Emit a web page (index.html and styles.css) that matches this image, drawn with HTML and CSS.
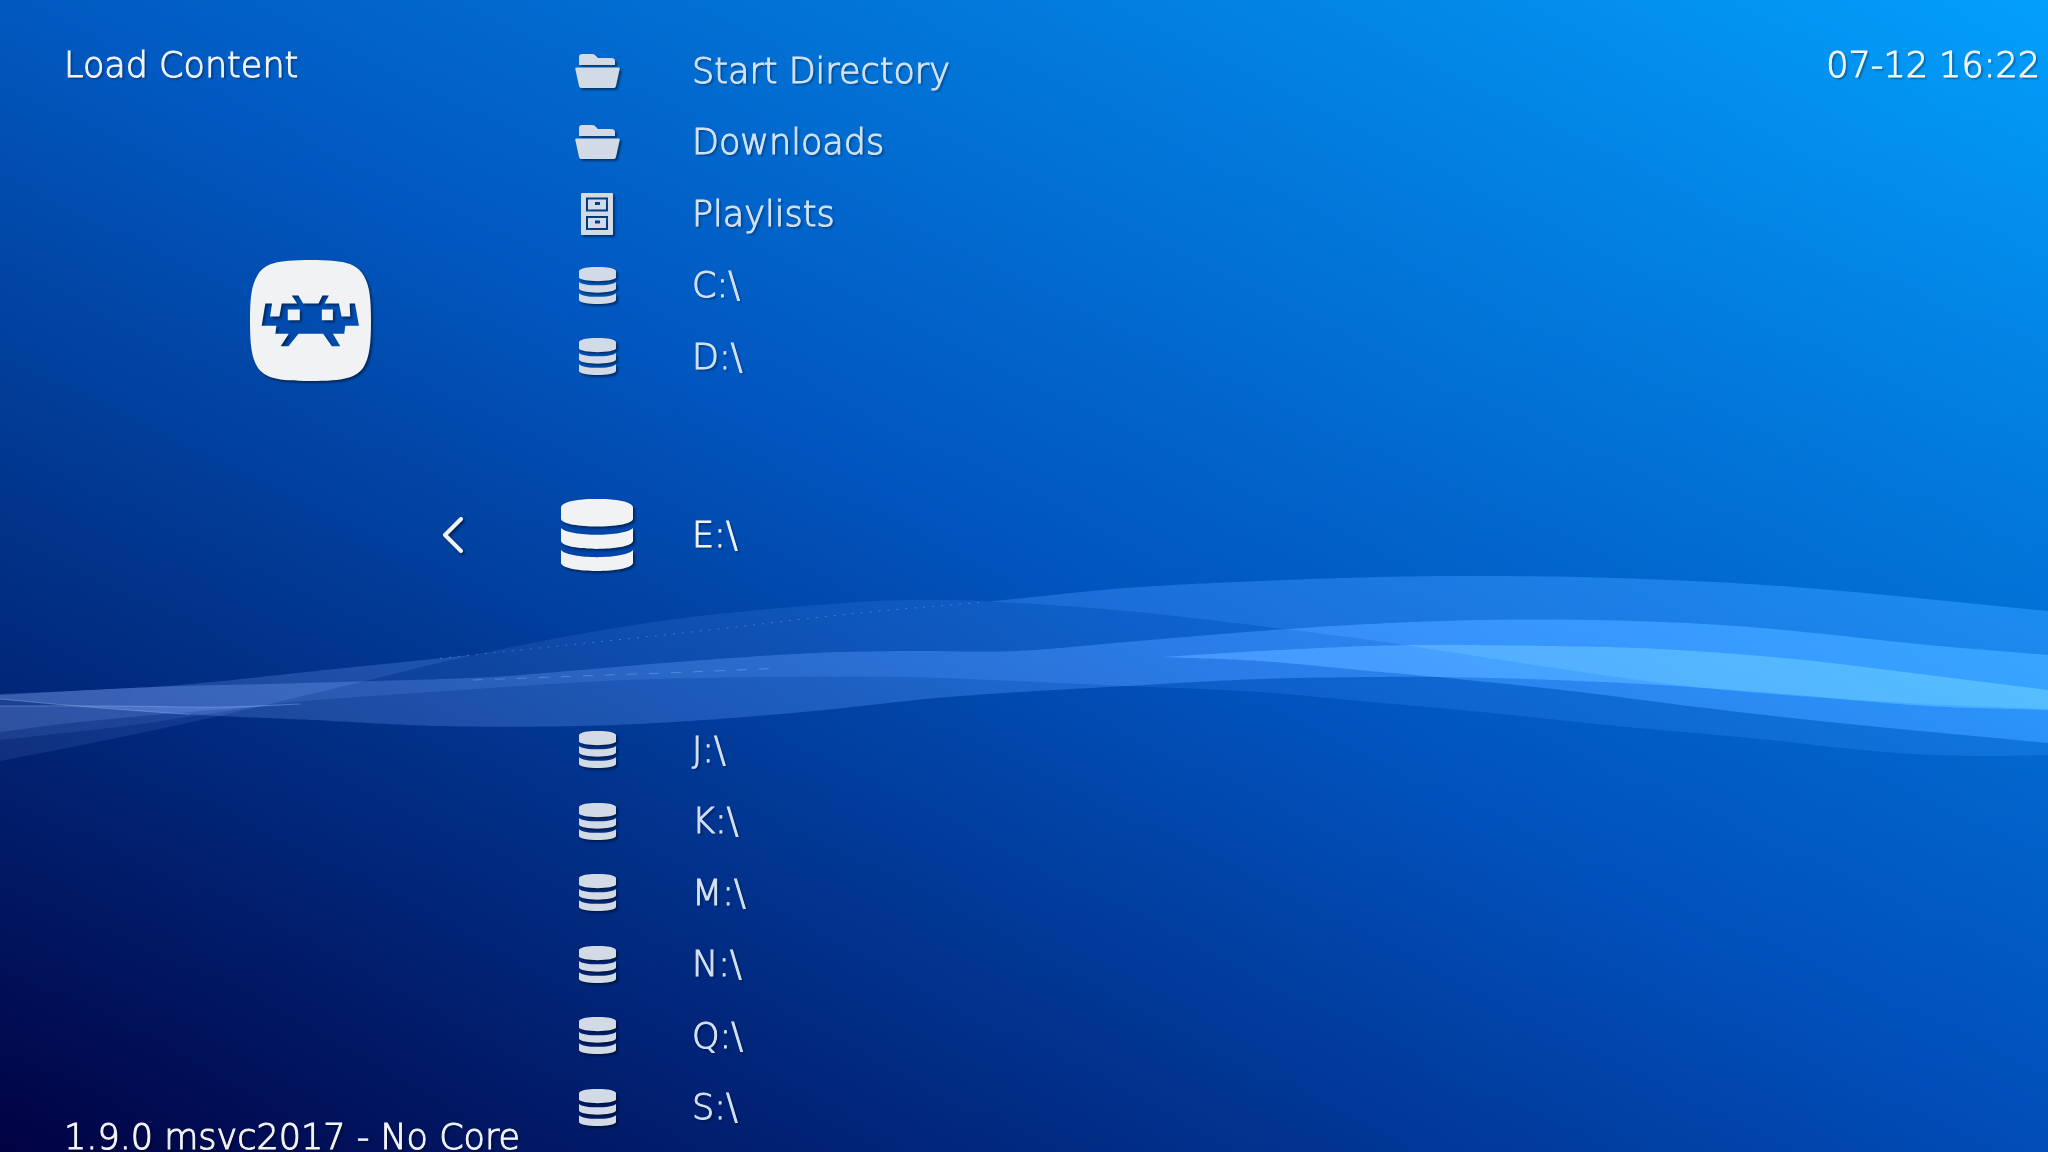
FILE: index.html
```html
<!DOCTYPE html>
<html lang="en">
<head>
<meta charset="utf-8">
<title>Load Content</title>
<link rel="stylesheet" href="styles.css">
</head>
<body>
<svg class="defs" aria-hidden="true">
  <symbol id="drive" viewBox="0 0 72 72">
    <path d="M0 8C2-3 70-3 72 8V20C70 30 2 30 0 20Z"/>
    <path d="M0 29C8 38 64 38 72 29V42C70 52.5 2 52.5 0 42Z"/>
    <path d="M0 51C8 60.5 64 60.5 72 51V64C70 74.6 2 74.6 0 64Z"/>
  </symbol>
  <symbol id="folder" viewBox="0 0 45 34">
    <path d="M4 11V3Q4 0 7 0H17Q20 0 21 2L23 4H36Q40 4 40 7V11Z"/>
    <path d="M1 13.5H44Q45 13.500 44.700 15L41 32Q40.500 34 39 34H6Q4.500 34 4 32L.3 15Q0 13.500 1 13.500Z"/>
  </symbol>
  <symbol id="cabinet" viewBox="0 0 32 42">
    <path fill-rule="evenodd" d="M1 0H31Q32 0 32 1V41Q32 42 31 42H1Q0 42 0 41V1Q0 0 1 0ZM5 4.500V18.500H27V4.500ZM7 6.500H25V16.500H7ZM5 23V37H27V23ZM7 25H25V35H7ZM14 9V12H19V9ZM14 27.500V30.500H19V27.500Z"/>
  </symbol>
</svg>

<svg class="waves" viewBox="0 0 2048 1152" preserveAspectRatio="none" aria-hidden="true"></svg>

<div class="screen">
  <div class="side">
    <h1 class="title">Load Content</h1>
    <svg class="logo" viewBox="62 60 362 362" role="img" aria-label="RetroArch">
      <path fill-rule="evenodd" d="M243 60C345 60 380 70 402 106C420 136 424 175 424 241C424 310 420 350 402 380C380 412 345 422 243 422C141 422 106 412 84 380C66 350 62 310 62 241C62 175 66 136 84 106C106 70 141 60 243 60ZM108 190L97 257H141L138 281H178L154 318H177L207 281H281L307 318H332L310 281H344L347 257H388L376 190H360L362 229H336L328 190H285L298 166H279L267 190H221L207 166H187L203 190H157L150 229H122L128 190ZM175 208H211V240H175ZM277 208H310V240H277Z"/>
    </svg>
    <p class="version">1.9.0 msvc2017 - No Core</p>
  </div>

  <ul class="entries">
    <li><a class="entry" href="#start"><svg class="icon icon-folder"><use href="#folder"/></svg><span class="label">Start Directory</span></a></li>
    <li><a class="entry" href="#downloads"><svg class="icon icon-folder"><use href="#folder"/></svg><span class="label">Downloads</span></a></li>
    <li><a class="entry" href="#playlists"><svg class="icon icon-cabinet"><use href="#cabinet"/></svg><span class="label">Playlists</span></a></li>
    <li><a class="entry" href="#c"><svg class="icon icon-drive"><use href="#drive"/></svg><span class="label">C:\</span></a></li>
    <li><a class="entry" href="#d"><svg class="icon icon-drive"><use href="#drive"/></svg><span class="label">D:\</span></a></li>
    <li class="current">
      <button class="back" type="button" aria-label="Back"><svg class="chevron" viewBox="0 0 22 38"><path d="M19 3L3 19L19 35"/></svg></button>
      <a class="entry" href="#e" aria-current="true"><svg class="icon icon-active"><use href="#drive"/></svg><span class="label">E:\</span></a>
    </li>
    <li><a class="entry" href="#j"><svg class="icon icon-drive"><use href="#drive"/></svg><span class="label">J:\</span></a></li>
    <li><a class="entry" href="#k"><svg class="icon icon-drive"><use href="#drive"/></svg><span class="label">K:\</span></a></li>
    <li><a class="entry" href="#m"><svg class="icon icon-drive"><use href="#drive"/></svg><span class="label">M:\</span></a></li>
    <li><a class="entry" href="#n"><svg class="icon icon-drive"><use href="#drive"/></svg><span class="label">N:\</span></a></li>
    <li><a class="entry" href="#q"><svg class="icon icon-drive"><use href="#drive"/></svg><span class="label">Q:\</span></a></li>
    <li><a class="entry" href="#s"><svg class="icon icon-drive"><use href="#drive"/></svg><span class="label">S:\</span></a></li>
  </ul>

  <time class="clock">07-12 16:22</time>
</div>
<script src="waves.js"></script>
</body>
</html>
```

FILE: styles.css
```css
* {
  box-sizing: border-box;
}

body {
  margin: 0;
  height: 100vh;
  overflow: hidden;
  position: relative;
  font-family: "DejaVu Sans", "Noto Sans", sans-serif;
  font-weight: 200;
  font-size: 35px;
  line-height: 44px;
  color: #f2f4f8;
  -webkit-text-stroke: 1px currentColor;
  text-shadow: 2px 2px 2px rgba(0, 0, 0, 0.4);
  background:
    linear-gradient(to bottom right, rgba(0, 200, 255, 0.05), rgba(0, 200, 255, 0) 50%, rgba(0, 0, 130, 0) 50%, rgba(0, 0, 130, 0.08)),
    linear-gradient(to top right, #010243, #0153bd 50%, #039ffb);
}

.defs {
  position: absolute;
  width: 0;
  height: 0;
}

/* Ribbon backdrop */
.waves {
  position: absolute;
  inset: 0;
  width: 100%;
  height: 100%;
}

.ribbon {
  fill: #fff;
  mix-blend-mode: plus-lighter;
}

.spark {
  fill: none;
  stroke: #a0c4ff;
  stroke-width: 1;
  opacity: 0.35;
}

.screen {
  position: relative;
  display: grid;
  grid-template-columns: 433px 1fr auto;
  grid-template-rows: minmax(0, 1fr);
  height: 100%;
}

/* Left column */
.side {
  display: flex;
  flex-direction: column;
  padding: 43px 0 0 64px;
  white-space: nowrap;
}

.title,
.version {
  margin: 0;
  font-size: 35px;
  font-weight: 200;
}

.logo {
  width: 121px;
  height: 121px;
  margin: 173px 0 0 186px;
  fill: #f1f2f4;
  filter: drop-shadow(2px 2px 1px rgba(0, 0, 0, 0.45));
}

.version {
  margin-top: auto;
  line-height: 30px;
}

.clock {
  padding: 43px 8px 0 0;
}

/* Entry list: the current row has free space above and below it */
.entries {
  display: grid;
  grid-template-rows: repeat(5, minmax(0, 2fr)) minmax(0, 9fr) repeat(6, minmax(0, 2fr));
  margin: 0;
  padding: 35px 0 9px;
  list-style: none;
}

.entries li {
  display: flex;
  align-items: center;
  padding-left: 112px;
}

.entries .current {
  display: grid;
  grid-template-columns: 112px 1fr;
  grid-template-rows: minmax(0, 3fr) minmax(0, 2fr) minmax(0, 4fr);
  padding-left: 0;
}

.back {
  grid-row: 2;
  display: flex;
  padding: 0 0 0 9px;
  border: 0;
  background: none;
}

.chevron {
  width: 22px;
  height: 38px;
  fill: none;
  stroke: #f1f2f4;
  stroke-width: 4;
  stroke-linecap: round;
  stroke-linejoin: round;
  filter: drop-shadow(2px 2px 1px rgba(0, 0, 0, 0.45));
}

.entry {
  display: grid;
  grid-template-columns: 104px auto;
  column-gap: 43px;
  align-items: center;
  justify-content: start;
  justify-items: center;
  color: #d4e2f4;
  text-decoration: none;
  white-space: nowrap;
}

.current .entry {
  grid-row: 2;
  color: #f2f4f8;
}

.icon {
  fill: #d2dae6;
  filter: drop-shadow(2px 2px 1px rgba(0, 0, 0, 0.45));
}

.icon-folder {
  width: 45px;
  height: 34px;
}

.icon-cabinet {
  width: 32px;
  height: 42px;
}

.icon-drive {
  width: 37px;
  height: 37px;
}

.icon-active {
  width: 72px;
  height: 72px;
  fill: #f1f2f4;
}
```

FILE: waves.js
```js
// Edges of the ribbons, as x, y pairs on a 2048 x 1152 canvas.
const crestA = [0,694, 90,690, 179,685, 335,669, 491,653, 700,631, 859,613, 984,602, 1126,588, 1260,581, 1380,577, 1482,576, 1616,578, 1794,587, 2048,611];
const crestB = [0,761, 112,739, 223,715, 357,683, 469,656, 580,634, 700,616, 859,602, 930,600, 1001,602, 1126,611, 1260,626, 1370,640, 1482,657, 1616,677, 1705,688, 1794,696, 1928,704, 2048,709];
const midTop = [0,695, 152,687, 268,684, 375,681, 491,677, 580,670, 690,661, 814,653, 903,651, 1015,651, 1126,642, 1260,631, 1370,624, 1482,620, 1594,620, 1705,624, 1794,631, 1928,645, 2048,655];
const midBottom = [0,699, 89,707, 201,715, 313,720, 438,726, 580,726, 690,721, 814,711, 948,697, 1126,686, 1260,679, 1370,677, 1437,677, 1527,679, 1660,685, 1794,695, 1928,706, 2048,710];
const low = [0,740, 134,725, 201,715, 286,703, 357,697, 446,691, 536,685, 625,680, 700,678, 769,677, 903,677, 992,680, 1126,686, 1260,692, 1370,702, 1482,712, 1616,726, 1750,738, 1884,752, 1973,756, 2048,755];
const glowTop = [1162,657, 1260,651, 1370,646, 1437,645, 1549,646, 1660,649, 1794,659, 1928,675, 2048,690];
const glowBottom = [1162,657, 1260,661, 1370,671, 1437,677, 1571,691, 1705,708, 1839,723, 2048,743];
const tailTop = [0,706, 110,706, 223,707, 300,704];
const tailBottom = [0,732, 80,722, 201,711, 300,704];
const spark = [350,684, 473,680, 580,676, 690,672, 850,665];

const pairs = flat => flat.reduce((out, v, i) => (i % 2 ? out[out.length - 1].push(v) : out.push([v]), out), []);

// Smooth curve through the points, sampled every few pixels of x.
function height(points, x) {
  let i = 0;
  while (i < points.length - 2 && x > points[i + 1][0]) i++;
  const slope = k => {
    const a = points[Math.max(k - 1, 0)], b = points[Math.min(k + 1, points.length - 1)];
    return (b[1] - a[1]) / (b[0] - a[0]);
  };
  const [x0, y0] = points[i], [x1, y1] = points[i + 1];
  const h = x1 - x0, t = (x - x0) / h, u = 1 - t;
  return y0 * (1 + 2 * t) * u * u + y1 * t * t * (3 - 2 * t) + h * t * u * (slope(i) * u - slope(i + 1) * t);
}

function sample(flat, from, to) {
  const points = pairs(flat), out = [];
  for (let x = from; x < to; x += 4) out.push([x, height(points, x)]);
  out.push([to, height(points, to)]);
  return out;
}

const svg = document.querySelector('.waves');
function draw(points, name, opacity, dash) {
  const path = document.createElementNS('http://www.w3.org/2000/svg', 'path');
  path.setAttribute('d', 'M' + points.map(p => p[0] + ' ' + p[1].toFixed(1)).join('L'));
  path.setAttribute('class', name);
  if (opacity) path.setAttribute('fill-opacity', opacity);
  if (dash) path.setAttribute('stroke-dasharray', dash);
  svg.append(path);
}
const band = (top, bottom, from, to, opacity) =>
  draw([...sample(top, from, to), ...sample(bottom, from, to).reverse()], 'ribbon', opacity);

const crest = [...sample(crestA, 0, 469), ...sample(crestB, 470, 984), ...sample(crestA, 985, 2048)];
draw([...crest, ...sample(low, 0, 2048).reverse()], 'ribbon', 0.05);
band(crestA, crestB, 0, 475, 0.06);
band(crestA, crestB, 984, 2048, 0.05);
band(midTop, midBottom, 0, 2048, 0.11);
band(glowTop, glowBottom, 1162, 2048, 0.11);
band(tailTop, tailBottom, 0, 300, 0.07);

draw(sample(crestA, 440, 984), 'spark', 0, '2 7');
draw(sample(spark, 473, 780), 'spark', 0, '10 12');
draw(sample(midBottom, 0, 190), 'spark');
draw(sample(tailTop, 0, 300), 'spark');
```
